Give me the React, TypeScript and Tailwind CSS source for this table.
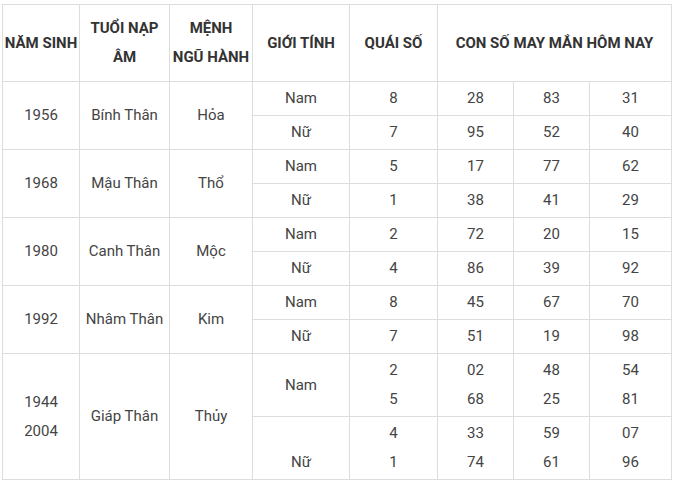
import React from 'react';

type Row = {
  nam: string[];
  tuoi: string;
  menh: string;
  rows: { gioi: string[]; quai: string[]; so: string[][] }[];
};

// Dữ liệu bảng con số may mắn
const data: Row[] = [
  {
    nam: ['1956'],
    tuoi: 'Bính Thân',
    menh: 'Hỏa',
    rows: [
      { gioi: ['Nam'], quai: ['8'], so: [['28'], ['83'], ['31']] },
      { gioi: ['Nữ'], quai: ['7'], so: [['95'], ['52'], ['40']] },
    ],
  },
  {
    nam: ['1968'],
    tuoi: 'Mậu Thân',
    menh: 'Thổ',
    rows: [
      { gioi: ['Nam'], quai: ['5'], so: [['17'], ['77'], ['62']] },
      { gioi: ['Nữ'], quai: ['1'], so: [['38'], ['41'], ['29']] },
    ],
  },
  {
    nam: ['1980'],
    tuoi: 'Canh Thân',
    menh: 'Mộc',
    rows: [
      { gioi: ['Nam'], quai: ['2'], so: [['72'], ['20'], ['15']] },
      { gioi: ['Nữ'], quai: ['4'], so: [['86'], ['39'], ['92']] },
    ],
  },
  {
    nam: ['1992'],
    tuoi: 'Nhâm Thân',
    menh: 'Kim',
    rows: [
      { gioi: ['Nam'], quai: ['8'], so: [['45'], ['67'], ['70']] },
      { gioi: ['Nữ'], quai: ['7'], so: [['51'], ['19'], ['98']] },
    ],
  },
  {
    nam: ['1944', '2004'],
    tuoi: 'Giáp Thân',
    menh: 'Thủy',
    rows: [
      { gioi: ['Nam'], quai: ['2', '5'], so: [['02', '68'], ['48', '25'], ['54', '81']] },
      { gioi: ['\u00a0', 'Nữ'], quai: ['4', '1'], so: [['33', '74'], ['59', '61'], ['07', '96']] },
    ],
  },
];

function Lines({ items }: { items: string[] }) {
  return (
    <>
      {items.map((t, i) => (
        <div key={i}>{t}</div>
      ))}
    </>
  );
}

const td = 'border border-[#dddddd] p-0 py-[2px] text-center align-middle whitespace-nowrap text-[#444444]';
const th = 'border border-[#dddddd] p-0 py-[9px] text-center align-middle font-bold whitespace-nowrap text-[#333333]';

export default function App() {
  return (
    <div className="min-h-screen bg-white pl-[2px] pt-[4px]" style={{ fontFamily: 'Roboto, "Noto Sans", sans-serif' }}>
      <table className="table-fixed border-collapse w-[669px] text-[15px] leading-[29px]">
        <colgroup>
          <col className="w-[77px]" />
          <col className="w-[90px]" />
          <col className="w-[83px]" />
          <col className="w-[97px]" />
          <col className="w-[88px]" />
          <col className="w-[76px]" />
          <col className="w-[76px]" />
          <col className="w-[82px]" />
        </colgroup>
        <thead>
          <tr>
            <th className={th}>NĂM SINH</th>
            <th className={th}>
              TUỔI NẠP
              <br />
              ÂM
            </th>
            <th className={th}>
              MỆNH
              <br />
              NGŨ HÀNH
            </th>
            <th className={th}>GIỚI TÍNH</th>
            <th className={th}>QUÁI SỐ</th>
            <th className={th} colSpan={3}>
              CON SỐ MAY MẮN HÔM NAY
            </th>
          </tr>
        </thead>
        <tbody>
          {data.map((r) =>
            r.rows.map((s, i) => (
              <tr key={r.tuoi + i}>
                {i === 0 && (
                  <>
                    <td className={td} rowSpan={2}>
                      <Lines items={r.nam} />
                    </td>
                    <td className={td} rowSpan={2}>
                      {r.tuoi}
                    </td>
                    <td className={td} rowSpan={2}>
                      {r.menh}
                    </td>
                  </>
                )}
                <td className={td}>
                  <Lines items={s.gioi} />
                </td>
                <td className={td}>
                  <Lines items={s.quai} />
                </td>
                {s.so.map((n, j) => (
                  <td key={j} className={td}>
                    <Lines items={n} />
                  </td>
                ))}
              </tr>
            ))
          )}
        </tbody>
      </table>
    </div>
  );
}
